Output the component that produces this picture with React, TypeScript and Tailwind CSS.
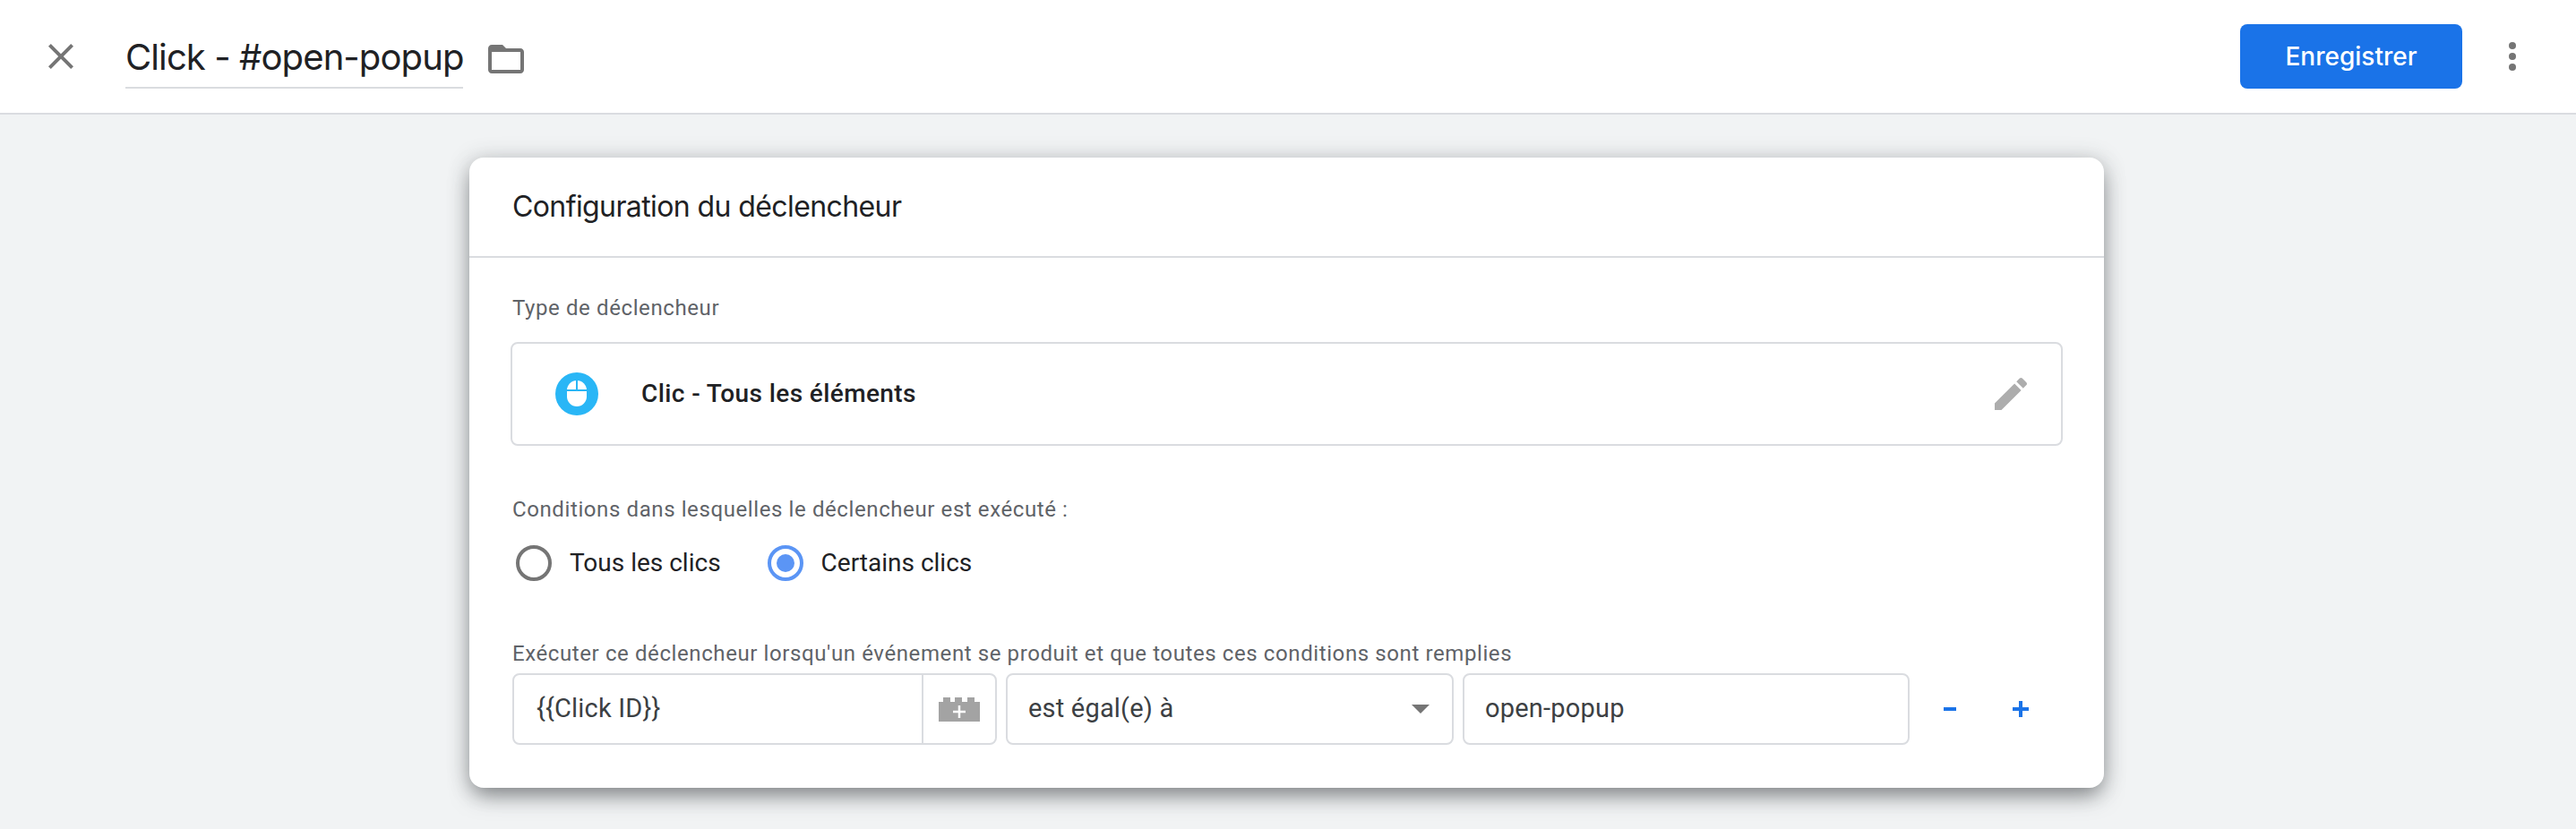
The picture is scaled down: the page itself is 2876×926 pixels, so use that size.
import React from 'react';

const googleFont = "font-['Inter',sans-serif]";
const bodyFont = "font-['Roboto',sans-serif]";

function MouseBadge() {
    return (
        <svg width="48" height="48" viewBox="0 0 48 48" className="shrink-0">
            <circle cx="24" cy="24" r="24" fill="#29b6f6" />
            <rect x="13" y="9" width="22" height="29" rx="11" fill="#fff" />
            <path d="M13 20h22M24 9v11" stroke="#29b6f6" strokeWidth="2" fill="none" />
        </svg>
    );
}

function VariableIcon() {
    return (
        <svg width="46" height="27" viewBox="0 0 46 27">
            <path d="M0 5h5V0h8v5h5V0h8v5h6V0h8v5h6v22H0z" fill="#a3a3a3" />
            <path d="M23 9v14M16 16h14" stroke="#fff" strokeWidth="2.5" />
        </svg>
    );
}

function Radio({ label, checked }: { label: string; checked?: boolean }) {
    return (
        <div className="flex items-center gap-5">
            <div className={`w-10 h-10 rounded-full border-4 flex items-center justify-center ${checked ? 'border-[#5b95f5]' : 'border-[#757575]'}`}>
                {checked && <div className="w-5 h-5 rounded-full bg-[#5b95f5]" />}
            </div>
            <span className="text-[28px] text-[#202124]">{label}</span>
        </div>
    );
}

export default function App() {
    return (
        <div className={`h-[926px] w-full overflow-hidden bg-[#f1f3f4] ${bodyFont}`}>
            {/* TOP BAR */}
            <header className="h-[128px] bg-white border-b-2 border-[#dadce0] flex items-center justify-between pl-[44px] pr-[47px]">
                <div className="flex items-center">
                    <svg width="48" height="48" viewBox="0 0 24 24" fill="#757575" className="mr-12">
                        <path d="M19 6.41L17.59 5 12 10.59 6.41 5 5 6.41 10.59 12 5 17.59 6.41 19 12 13.41 17.59 19 19 17.59 13.41 12z" />
                    </svg>
                    <div className={`mt-[13px] pb-[9px] border-b-2 border-[#dadce0] text-[40px] leading-[48px] tracking-[-0.9px] text-[#202124] mr-6 ${googleFont}`}>Click - #open-popup</div>
                    <svg width="48" height="48" viewBox="0 0 24 24" fill="#757575" className="mt-[6px]">
                        <path d="M20 6h-8l-2-2H4c-1.1 0-1.99.9-1.99 2L2 18c0 1.1.9 2 2 2h16c1.1 0 2-.9 2-2V8c0-1.1-.9-2-2-2zm0 12H4V8h16v10z" />
                    </svg>
                </div>
                <div className="flex items-center gap-8">
                    <button className={`w-[248px] h-[72px] rounded-lg bg-[#1a73e8] text-white text-[28px] font-medium ${googleFont}`}>Enregistrer</button>
                    <svg width="48" height="48" viewBox="0 0 24 24" fill="#757575">
                        <circle cx="12" cy="6" r="2" />
                        <circle cx="12" cy="12" r="2" />
                        <circle cx="12" cy="18" r="2" />
                    </svg>
                </div>
            </header>

            {/* TRIGGER CARD */}
            <section className="ml-[524px] mt-12 w-[1825px] h-[704px] bg-white rounded-2xl shadow-[0_12px_24px_-4px_rgba(60,64,67,0.55),0_2px_24px_rgba(60,64,67,0.25)]">
                <div className="h-[112px] border-b-2 border-[#dadce0] flex items-center pl-12">
                    <h2 className={`text-[32px] font-normal tracking-[-0.6px] text-[#202124] ${googleFont}`}>Configuration du déclencheur</h2>
                </div>

                <div className="pl-12 pr-[46px] pt-10">
                    <p className="text-[24px] leading-[32px] tracking-[0.6px] text-[#5f6368]">Type de déclencheur</p>
                    <div className="mt-[22px] h-[116px] -ml-[2px] border-2 border-[#dadce0] rounded-lg flex items-center justify-between pl-12 pr-8">
                        <div className="flex items-center gap-12">
                            <MouseBadge />
                            <span className="text-[28px] font-medium tracking-[0.4px] text-[#202124]">Clic - Tous les éléments</span>
                        </div>
                        <svg width="48" height="48" viewBox="0 0 24 24" fill="#adadad">
                            <path d="M3 17.25V21h3.75L17.81 9.94l-3.75-3.75L3 17.25zM20.71 7.04c.39-.39.39-1.02 0-1.41l-2.34-2.34c-.39-.39-1.02-.39-1.41 0l-1.83 1.83 3.75 3.75 1.83-1.83z" />
                        </svg>
                    </div>

                    <p className="mt-[55px] text-[24px] leading-[32px] tracking-[0.6px] text-[#5f6368]">Conditions dans lesquelles le déclencheur est exécuté :</p>
                    <div className="mt-[23px] ml-1 flex items-center gap-[52px]">
                        <Radio label="Tous les clics" />
                        <Radio label="Certains clics" checked />
                    </div>

                    <p className="mt-[64px] text-[24px] leading-[32px] tracking-[0.6px] text-[#5f6368]">Exécuter ce déclencheur lorsqu'un événement se produit et que toutes ces conditions sont remplies</p>
                    <div className="mt-[6px] flex items-center">
                        <div className="w-[541px] h-[80px] border-2 border-[#dadce0] rounded-lg flex items-center">
                            <span className="flex-1 pl-[25px] text-[29px] tracking-[0.2px] text-[#3c4043]">{'{{Click ID}}'}</span>
                            <div className="w-[82px] h-full border-l-2 border-[#dadce0] flex items-center justify-center">
                                <VariableIcon />
                            </div>
                        </div>
                        <div className="ml-[10px] w-[500px] h-[80px] border-2 border-[#dadce0] rounded-lg flex items-center justify-between pl-[23px] pr-[25px]">
                            <span className="text-[29px] tracking-[0.2px] text-[#3c4043]">est égal(e) à</span>
                            <div className="w-0 h-0 border-x-[10px] border-x-transparent border-t-[10px] border-t-[#757575]" />
                        </div>
                        <div className="ml-[10px] w-[499px] h-[80px] border-2 border-[#dadce0] rounded-lg flex items-center pl-[23px]">
                            <span className="text-[29px] tracking-[0.2px] text-[#3c4043]">open-popup</span>
                        </div>
                        <button className="ml-[38px] w-[14px] h-1 bg-[#1a73e8]" />
                        <svg width="18" height="18" viewBox="0 0 18 18" className="ml-[63px]">
                            <path d="M9 0v18M0 9h18" stroke="#1a73e8" strokeWidth="4" />
                        </svg>
                    </div>
                </div>
            </section>
        </div>
    );
}
